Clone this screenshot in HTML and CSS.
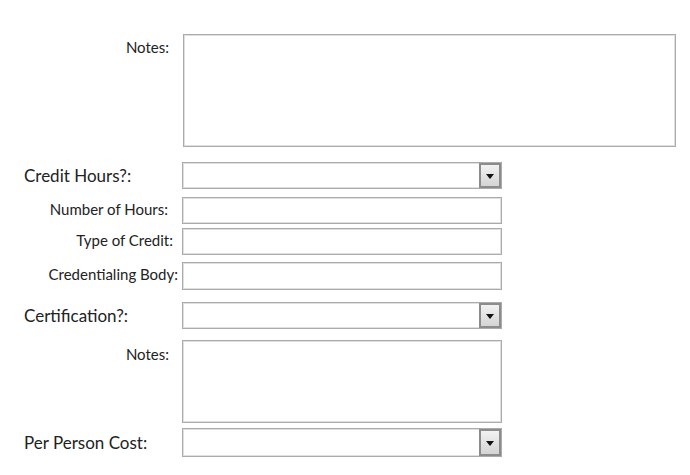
FILE: index.html
```html
<!DOCTYPE html>
<html>
<head>
<meta charset="utf-8">
<link rel="stylesheet" href="styles.css">
</head>
<body>
<div class="form">
  <div class="row row-notes">
    <div class="label label-sm pr-13 label-top">Notes:</div>
    <div class="box box-notes"></div>
  </div>
  <div class="row row-credit">
    <div class="label label-lg">Credit Hours?:</div>
    <div class="box box-field box-combo"><div class="btn"><span class="arrow"></span></div></div>
  </div>
  <div class="row row-hours">
    <div class="label label-sm pr-14">Number of Hours:</div>
    <div class="box box-field"></div>
  </div>
  <div class="row row-type">
    <div class="label label-sm pr-9">Type of Credit:</div>
    <div class="box box-field"></div>
  </div>
  <div class="row row-body">
    <div class="label label-sm pr-4">Credentialing Body:</div>
    <div class="box box-field"></div>
  </div>
  <div class="row row-cert">
    <div class="label label-lg">Certification?:</div>
    <div class="box box-field box-combo"><div class="btn"><span class="arrow"></span></div></div>
  </div>
  <div class="row row-notes2">
    <div class="label label-sm pr-13 label-top2">Notes:</div>
    <div class="box box-field box-notes2"></div>
  </div>
  <div class="row row-cost">
    <div class="label label-lg">Per Person Cost:</div>
    <div class="box box-field box-combo"><div class="btn"><span class="arrow"></span></div></div>
  </div>
</div>
</body>
</html>
```

FILE: styles.css
```css
html, body {
  margin: 0;
  padding: 0;
  background: #ffffff;
}
body {
  font-family: Lato, "Open Sans", "Liberation Sans", sans-serif;
  color: #222222;
  width: 690px;
  height: 475px;
  overflow: hidden;
}
.form {
  display: flex;
  flex-direction: column;
  padding-top: 34px;
}
.row {
  display: flex;
  align-items: center;
}
.label {
  width: 182px;
  flex: none;
  box-sizing: border-box;
  white-space: nowrap;
}
.label-sm {
  font-size: 15px;
  line-height: 18px;
  text-align: right;
  padding-bottom: 4px;
}
.label-lg {
  font-size: 17px;
  line-height: 20px;
  padding-left: 24px;
}
.pr-13 { padding-right: 13px; }
.pr-14 { padding-right: 14px; }
.pr-9 { padding-right: 9px; }
.pr-4 { padding-right: 4px; }

.label-top {
  align-self: flex-start;
  padding-top: 4px;
  padding-bottom: 0;
}
.label-top2 {
  align-self: flex-start;
  padding-top: 5px;
  padding-bottom: 0;
}

.box {
  box-sizing: border-box;
  border: 1px solid #ababab;
  box-shadow: inset 0 0 0 1px #e0e0e0;
  background: #ffffff;
  flex: none;
}
.box-notes {
  width: 493px;
  height: 113px;
  margin-left: 1px;
}
.box-field {
  width: 320px;
  height: 27px;
}
.box-combo {
  display: flex;
  justify-content: flex-end;
}
.btn {
  width: 22px;
  height: 100%;
  box-sizing: border-box;
  border: 2px solid #8c8c8c;
  background: linear-gradient(#f2f2f2, #d4d4d4);
  display: flex;
  align-items: center;
  justify-content: center;
}
.arrow {
  width: 0;
  height: 0;
  border-left: 4px solid transparent;
  border-right: 4px solid transparent;
  border-top: 5px solid #111111;
  margin-top: 1px;
}

.row-credit { margin-top: 15px; }
.row-hours { margin-top: 8px; }
.row-type { margin-top: 4px; }
.row-body { margin-top: 7px; }
.row-body .box-field { height: 28px; }
.row-cert { margin-top: 12px; }
.row-notes2 { margin-top: 11px; }
.box-notes2 { height: 83px; }
.row-cost { margin-top: 5px; }
.row-cost .box-field { height: 29px; }
```
